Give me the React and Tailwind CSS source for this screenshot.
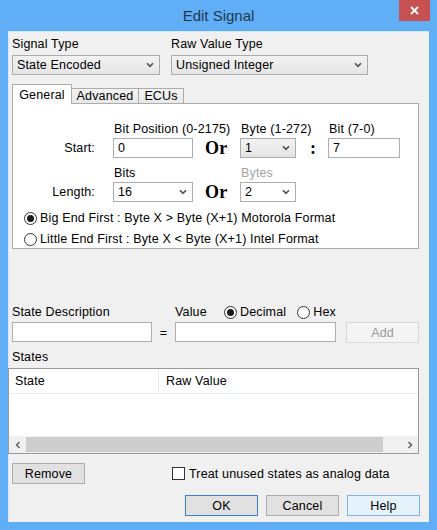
import React from 'react';

function Chevron() {
  return (
    <svg width="8" height="6" viewBox="0 0 8 6">
      <path d="M1 1.2 L4 4.4 L7 1.2" fill="none" stroke="#505050" strokeWidth="1.6" />
    </svg>
  );
}

function Select({ value, w, gray }) {
  return (
    <div
      className={`flex h-[20px] items-center justify-between border border-[#acacac] pl-[4px] pr-[5px] ${w} ${
        gray ? 'bg-linear-to-b from-[#f2f2f2] to-[#e5e5e5]' : 'bg-white'
      }`}
    >
      <span className="text-[#000]">{value}</span>
      <Chevron />
    </div>
  );
}

function Input({ value, w }) {
  return (
    <div className={`flex h-[20px] items-center border border-[#abadb3] bg-white pl-[4px] ${w}`}>
      {value}
    </div>
  );
}

function Radio({ checked }) {
  return (
    <span className="flex h-[13px] w-[13px] shrink-0 items-center justify-center rounded-full border border-[#333] bg-white">
      {checked && <span className="h-[7px] w-[7px] rounded-full bg-[#1a1a1a]" />}
    </span>
  );
}

function Button({ children, className }) {
  return (
    <div
      className={`flex h-[21px] w-[73px] items-center justify-center border ${className}`}
    >
      {children}
    </div>
  );
}

function Arrow({ dir }) {
  return (
    <svg width="6" height="8" viewBox="0 0 6 8">
      <path
        d={dir === 'left' ? 'M4.5 1 L1.5 4 L4.5 7' : 'M1.5 1 L4.5 4 L1.5 7'}
        fill="none"
        stroke="#606060"
        strokeWidth="1.5"
      />
    </svg>
  );
}

export default function App() {
  return (
    <div className="flex h-[530px] w-[437px] flex-col bg-[#60aef5] font-['Liberation_Sans',Arial,sans-serif] text-[12.5px] leading-[14px] tracking-[0.15px] text-black">
      {/* title bar */}
      <div className="relative flex h-[31px] shrink-0 items-center justify-center">
        <span className="text-[15px] tracking-normal text-[#22384f]">Edit Signal</span>
        <div className="absolute right-[7px] top-0 flex h-[21px] w-[31px] items-center justify-center bg-[#c75050]">
          <svg width="9" height="9" viewBox="0 0 9 9">
            <path d="M1 1 L8 8 M8 1 L1 8" stroke="#fff" strokeWidth="1.8" />
          </svg>
        </div>
      </div>

      {/* client */}
      <div className="mx-[8px] flex h-[491px] flex-col border-l border-t border-[#d6e8fa] bg-[#f0f0f0] pl-[3px] pt-[5px]">
        {/* type row */}
        <div className="flex">
          <div className="flex w-[148px] flex-col">
            <span>Signal Type</span>
            <div className="mt-[4px]">
              <Select value="State Encoded" w="w-[148px]" gray />
            </div>
          </div>
          <div className="ml-[11px] flex flex-col">
            <span>Raw Value Type</span>
            <div className="mt-[4px]">
              <Select value="Unsigned Integer" w="w-[197px]" gray />
            </div>
          </div>
        </div>

        {/* tabs */}
        <div className="mt-[9px] flex h-[19px] items-end">
          <div className="relative z-10 -mb-px flex h-[20px] w-[60px] items-start justify-center border border-b-0 border-[#acacac] bg-white pt-[3px]">
            General
          </div>
          <div className="flex h-[15px] w-[67px] items-center justify-center border border-b-0 border-l-0 border-[#acacac] bg-linear-to-b from-[#f3f3f3] to-[#e8e8e8]">
            Advanced
          </div>
          <div className="flex h-[15px] w-[45px] items-center justify-center border border-b-0 border-l-0 border-[#acacac] bg-linear-to-b from-[#f3f3f3] to-[#e8e8e8]">
            ECUs
          </div>
        </div>
        <div className="flex h-[146px] w-[407px] flex-col border border-[#acacac] bg-white pt-[18px]">
          <div className="flex">
            <div className="w-[100px]" />
            <div className="w-[127px] whitespace-nowrap pl-[1px]">Bit Position (0-2175)</div>
            <div className="w-[88px] whitespace-nowrap pl-[1px]">Byte (1-272)</div>
            <div className="w-[72px] whitespace-nowrap pl-[1px]">Bit (7-0)</div>
          </div>
          <div className="mt-[2px] flex items-center">
            <div className="w-[100px] pr-[18px] text-right">Start:</div>
            <Input value="0" w="w-[80px]" />
            <div className="w-[47px] pl-[12px] font-['Liberation_Serif',serif] text-[18px] font-bold">Or</div>
            <Select value="1" w="w-[56px]" gray />
            <div className="w-[32px] pl-[14px] font-['Liberation_Serif',serif] text-[18px] font-bold">:</div>
            <Input value="7" w="w-[72px]" />
          </div>
          <div className="mt-[8px] flex">
            <div className="w-[100px]" />
            <div className="w-[127px] pl-[1px]">Bits</div>
            <div className="pl-[1px] text-[#a3a3a3]">Bytes</div>
          </div>
          <div className="mt-[2px] flex items-center">
            <div className="w-[100px] pr-[18px] text-right">Length:</div>
            <Select value="16" w="w-[80px]" />
            <div className="w-[47px] pl-[12px] font-['Liberation_Serif',serif] text-[18px] font-bold">Or</div>
            <Select value="2" w="w-[56px]" />
          </div>
          <div className="ml-[11px] mt-[9px] flex items-center gap-[3px]">
            <Radio checked />
            <span>Big End First : Byte X &gt; Byte (X+1) Motorola Format</span>
          </div>
          <div className="ml-[11px] mt-[7px] flex items-center gap-[3px]">
            <Radio />
            <span>Little End First : Byte X &lt; Byte (X+1) Intel Format</span>
          </div>
        </div>

        {/* state entry */}
        <div className="mt-[56px] flex">
          <div className="flex w-[140px] flex-col">
            <span>State Description</span>
            <div className="mt-[3px]">
              <Input w="w-[140px]" />
            </div>
          </div>
          <div className="flex w-[23px] items-end justify-center pb-[3px]">=</div>
          <div className="flex flex-col">
            <div className="flex items-center">
              <span className="w-[49px]">Value</span>
              <Radio checked />
              <span className="ml-[3px]">Decimal</span>
              <span className="ml-[11px]">
                <Radio />
              </span>
              <span className="ml-[3px]">Hex</span>
            </div>
            <div className="mt-[3px] flex">
              <Input w="w-[161px]" />
              <Button className="ml-[10px] h-[20px] border-[#d9d9d9] bg-[#f4f4f4] text-[#9a9a9a]">Add</Button>
            </div>
          </div>
        </div>

        <div className="mt-[7px]">States</div>

        {/* states table */}
        <div className="-ml-[4px] mt-[4px] flex h-[86px] w-[411px] flex-col border border-[#9a9a9a] bg-white">
          <div className="flex h-[25px] shrink-0 border-b border-[#e3ecf5]">
            <div className="flex w-[150px] items-center border-r border-[#ebebeb] pl-[6px]">State</div>
            <div className="flex items-center pl-[7px]">Raw Value</div>
          </div>
          <div className="flex-1" />
          <div className="flex h-[17px] shrink-0 items-center bg-[#f0f0f0]">
            <div className="flex w-[17px] items-center justify-center">
              <Arrow dir="left" />
            </div>
            <div className="h-[15px] w-[357px] bg-[#cdcdcd]" />
            <div className="flex-1" />
            <div className="flex w-[17px] items-center justify-center">
              <Arrow dir="right" />
            </div>
          </div>
        </div>

        {/* remove row */}
        <div className="mt-[9px] flex items-center">
          <Button className="border-[#adadad] bg-[#e1e1e1]">Remove</Button>
          <span className="ml-[87px] h-[13px] w-[13px] border border-[#333] bg-white" />
          <span className="ml-[4px]">Treat unused states as analog data</span>
        </div>

        {/* dialog buttons */}
        <div className="mt-[11px] flex gap-[8px] pl-[173px]">
          <Button className="border-[#3c7fcf] bg-[#e1e1e1]">OK</Button>
          <Button className="border-[#adadad] bg-[#e1e1e1]">Cancel</Button>
          <Button className="border-[#7eb4ea] bg-[#e5f1fb]">Help</Button>
        </div>
      </div>
    </div>
  );
}
